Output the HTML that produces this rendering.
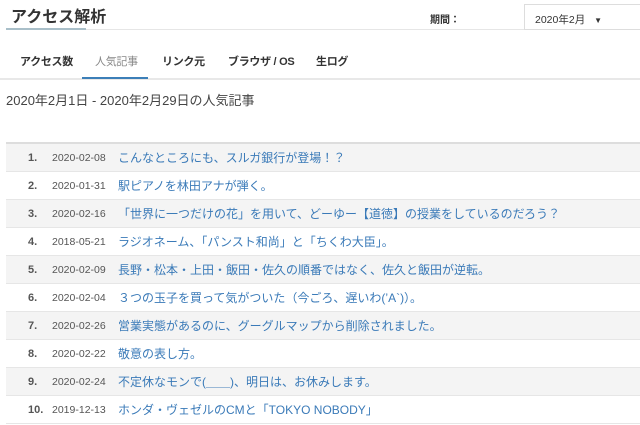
<!DOCTYPE html>
<html><head><meta charset="utf-8"><style>
body{margin:0;width:640px;height:425px;overflow:hidden;background:#fff;font-family:"Liberation Sans","Noto Sans CJK JP",sans-serif;color:#333}
.h{position:absolute;left:11px;top:3px;font-size:16px;font-weight:bold;color:#333}
.hl{position:absolute;left:6px;top:29px;width:634px;height:1px;background:#e6e6e6}
.hl2{position:absolute;left:6px;top:28px;width:80px;height:2px;background:#a9bfc9}
.pl{position:absolute;left:430px;top:11px;font-size:10px;font-weight:bold}
.sel{position:absolute;left:524px;top:4px;width:130px;height:26px;border:1px solid #ddd;box-sizing:border-box;font-size:10.5px;padding:7px 0 0 10px}
.tabs{position:absolute;left:0;top:52px;width:640px;height:26px;border-bottom:2px solid #e8e8e8}
.tab{position:absolute;top:1px;font-size:11px;font-weight:bold;color:#333;letter-spacing:-0.3px}
.act{color:#888;font-weight:normal}
.au{position:absolute;left:82px;top:77px;width:66px;height:2px;background:#3c7fb8}
.t{position:absolute;left:6px;top:90px;font-size:13px;color:#444}
table{position:absolute;left:6px;top:142px;width:634px;border-collapse:collapse;border-top:2px solid #ddd}
td{height:27px;border-bottom:1px solid #e6e6e6;padding:0;font-size:12px}
tr:nth-child(odd) td{background:#f4f4f4}
.n{width:46px;text-align:right;font-weight:bold;font-size:11px;color:#555}
.n span{display:inline-block;width:24px;text-align:left}
.d{width:66px;font-size:10.5px;color:#555}
.l{color:#3a7ab8}
</style></head><body>
<div class="h">アクセス解析</div><div class="hl"></div><div class="hl2"></div>
<div class="pl">期間：</div><div class="sel">2020年2月 <span style="font-size:8px;margin-left:6px">▼</span></div>
<div class="tabs">
<div class="tab" style="left:20px">アクセス数</div>
<div class="tab act" style="left:95px">人気記事</div>
<div class="tab" style="left:162px">リンク元</div>
<div class="tab" style="left:228px">ブラウザ / OS</div>
<div class="tab" style="left:316px">生ログ</div>
</div><div class="au"></div>
<div class="t">2020年2月1日 - 2020年2月29日の人気記事</div>
<table>
<tr><td class="n"><span>1.</span></td><td class="d">2020-02-08</td><td class="l">こんなところにも、スルガ銀行が登場！？</td></tr>
<tr><td class="n"><span>2.</span></td><td class="d">2020-01-31</td><td class="l">駅ピアノを林田アナが弾く。</td></tr>
<tr><td class="n"><span>3.</span></td><td class="d">2020-02-16</td><td class="l">「世界に一つだけの花」を用いて、どーゆー【道徳】の授業をしているのだろう？</td></tr>
<tr><td class="n"><span>4.</span></td><td class="d">2018-05-21</td><td class="l">ラジオネーム、「パンスト和尚」と「ちくわ大臣」。</td></tr>
<tr><td class="n"><span>5.</span></td><td class="d">2020-02-09</td><td class="l">長野・松本・上田・飯田・佐久の順番ではなく、佐久と飯田が逆転。</td></tr>
<tr><td class="n"><span>6.</span></td><td class="d">2020-02-04</td><td class="l">３つの玉子を買って気がついた（今ごろ、遅いわ(’A`)）。</td></tr>
<tr><td class="n"><span>7.</span></td><td class="d">2020-02-26</td><td class="l">営業実態があるのに、グーグルマップから削除されました。</td></tr>
<tr><td class="n"><span>8.</span></td><td class="d">2020-02-22</td><td class="l">敬意の表し方。</td></tr>
<tr><td class="n"><span>9.</span></td><td class="d">2020-02-24</td><td class="l">不定休なモンで(＿＿)、明日は、お休みします。</td></tr>
<tr><td class="n"><span>10.</span></td><td class="d">2019-12-13</td><td class="l">ホンダ・ヴェゼルのCMと「TOKYO NOBODY」</td></tr>
</table>
</body></html>
